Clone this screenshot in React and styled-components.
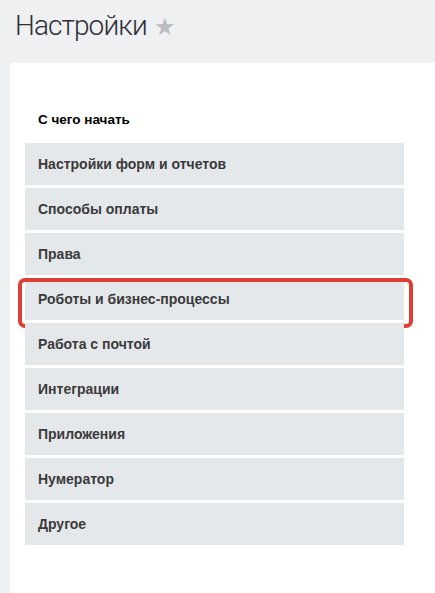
import styled, { createGlobalStyle } from "styled-components";

const GlobalStyle = createGlobalStyle`
  html, body {
    margin: 0;
    padding: 0;
    background: #eef0f2;
  }
  body {
    font-family: "Liberation Sans", Arial, sans-serif;
  }
`;

const Page = styled.div`
  height: 593px;
  display: flex;
  flex-direction: column;
  background: #eef0f2;
  padding-left: 10px;
  box-sizing: border-box;
  overflow: hidden;
`;

const TitleRow = styled.div`
  display: flex;
  align-items: center;
  gap: 7px;
  height: 63px;
  flex-shrink: 0;
  padding: 0 0 12px 5px;
  box-sizing: border-box;
`;

const Title = styled.h1`
  margin: 0;
  font-family: Roboto, sans-serif;
  font-weight: 300;
  font-size: 28px;
  letter-spacing: -0.9px;
  color: #2f2f36;
`;

const Star = styled.span`
  color: #b9bcc1;
  font-size: 24px;
  line-height: 1;
  margin-top: 3px;
`;

const Panel = styled.div`
  flex: 1;
  background: #fff;
  padding: 47px 31px 0 15px;
`;

const Heading = styled.div`
  font-size: 13.5px;
  font-weight: bold;
  color: #000;
  padding-left: 13px;
  height: 20px;
  line-height: 20px;
  margin-bottom: 13px;
`;

const List = styled.ul`
  list-style: none;
  margin: 0;
  padding: 0;
  display: flex;
  flex-direction: column;
  gap: 3px;
  width: 379px;
`;

const Item = styled.li`
  position: relative;
  height: 42px;
  display: flex;
  align-items: center;
  padding-left: 13px;
  background: #e5e8eb;
  font-size: 14px;
  font-weight: bold;
  color: #3a3a3a;

  ${(p) =>
    p.$marked &&
    `
    &::after {
      content: "";
      position: absolute;
      left: -7px;
      right: -9px;
      top: 0;
      bottom: -8px;
      border: 4px solid #df3e35;
      border-radius: 7px;
    }
  `}
`;

const items = [
  "Настройки форм и отчетов",
  "Способы оплаты",
  "Права",
  "Роботы и бизнес-процессы",
  "Работа с почтой",
  "Интеграции",
  "Приложения",
  "Нумератор",
  "Другое",
];

export default function App() {
  return (
    <Page>
      <GlobalStyle />
      <TitleRow>
        <Title>Настройки</Title>
        <Star>★</Star>
      </TitleRow>
      <Panel>
        <Heading>С чего начать</Heading>
        <List>
          {items.map((name) => (
            <Item key={name} $marked={name === "Роботы и бизнес-процессы"}>
              {name}
            </Item>
          ))}
        </List>
      </Panel>
    </Page>
  );
}
